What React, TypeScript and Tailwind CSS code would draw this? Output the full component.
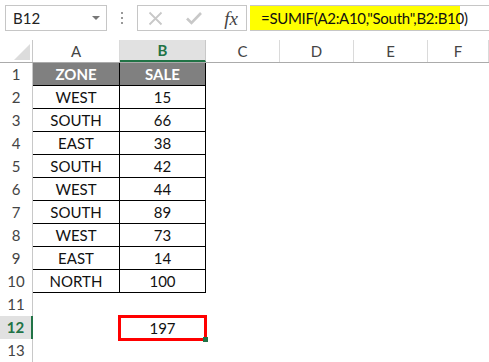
import React from "react";

const font = { fontFamily: "Lato, 'Liberation Sans', sans-serif" };

const rows: [string, string][] = [
  ["WEST", "15"],
  ["SOUTH", "66"],
  ["EAST", "38"],
  ["SOUTH", "42"],
  ["WEST", "44"],
  ["SOUTH", "89"],
  ["WEST", "73"],
  ["EAST", "14"],
  ["NORTH", "100"],
];

const cols = [
  { k: "A", w: "w-[87px]" },
  { k: "B", w: "w-[86px]" },
  { k: "C", w: "w-[74px]" },
  { k: "D", w: "w-[74px]" },
  { k: "E", w: "w-[74px]" },
  { k: "F", w: "flex-1" },
];

function RowNum({ n, active }: { n: number; active?: boolean }) {
  return (
    <div
      className={
        "w-[33px] shrink-0 h-full flex items-center justify-center text-[15px] border-r " +
        (active
          ? "bg-[#e1e1e1] text-[#217346] font-bold border-r-2 border-[#217346]"
          : "text-[#444] border-[#c8c8c8]")
      }
    >
      {n}
    </div>
  );
}

export default function App() {
  return (
    <div className="w-[489px] h-[362px] bg-white overflow-hidden relative" style={font}>
      {/* formula bar */}
      <div className="h-[40px] flex items-start pt-[5px]">
        <div className="ml-[5px] w-[102px] h-[26px] border border-[#c6c6c6] flex items-center justify-between pl-[7px] pr-[6px]">
          <span className="text-[15px] text-[#222]">B12</span>
          <span className="w-0 h-0 border-l-[4px] border-r-[4px] border-t-[4px] border-l-transparent border-r-transparent border-t-[#777]" />
        </div>
        <div className="w-[30px] h-[26px] flex flex-col items-center justify-center gap-[3px]">
          <span className="w-[2px] h-[2px] bg-[#999]" />
          <span className="w-[2px] h-[2px] bg-[#999]" />
          <span className="w-[2px] h-[2px] bg-[#999]" />
        </div>
        <div className="w-[110px] h-[26px] border border-[#c6c6c6] flex items-center pl-[10px] pr-[8px] justify-between">
          <svg width="15" height="15" viewBox="0 0 15 15">
            <path d="M1.5 1.5 L13.5 13.5 M13.5 1.5 L1.5 13.5" stroke="#c8c8c8" strokeWidth="1.8" />
          </svg>
          <svg width="16" height="14" viewBox="0 0 16 14">
            <path d="M1 7.5 L5.5 12 L15 2" stroke="#c8c8c8" strokeWidth="2.6" fill="none" />
          </svg>
          <span className="text-[19px] italic text-[#444] leading-none" style={{ fontFamily: "'Liberation Serif', serif" }}>
            fx
          </span>
        </div>
        <div className="ml-[3px] flex-1 h-[26px] border-y border-[#c6c6c6] flex items-stretch">
          <div className="w-[210px] bg-[#ffff00] flex items-center pl-[11px] text-[15px] tracking-[-0.3px] text-[#111] whitespace-nowrap">
            =SUMIF(A2:A10,"South",B2:B10)
          </div>
        </div>
      </div>

      {/* column headers */}
      <div className="h-[23px] flex border-b border-[#ababab]">
        <div className="w-[33px] shrink-0 border-r border-[#c8c8c8] flex items-end justify-end pr-[2px] pb-[2px]">
          <span className="w-0 h-0 border-b-[16px] border-l-[16px] border-b-[#dcdcdc] border-l-transparent" />
        </div>
        {cols.map((c) => (
          <div
            key={c.k}
            className={
              c.w +
              " shrink-0 flex items-center justify-center text-[15px] " +
              (c.k === "B"
                ? "bg-[#e1e1e1] text-[#217346] font-bold border-b-2 border-[#217346] border-r border-r-[#c8c8c8]"
                : "text-[#444] border-r border-[#dadada]")
            }
          >
            {c.k}
          </div>
        ))}
      </div>

      {/* row 1 */}
      <div className="h-[23px] flex">
        <RowNum n={1} />
        <div className="w-[87px] shrink-0 bg-[#808080] text-white font-bold text-[15px] flex items-center justify-center border-r border-b border-black">
          ZONE
        </div>
        <div className="w-[86px] shrink-0 bg-[#808080] text-white font-bold text-[15px] flex items-center justify-center border-r border-b border-black">
          SALE
        </div>
      </div>

      {rows.map(([z, s], i) => (
        <div key={i} className="h-[23px] flex">
          <RowNum n={i + 2} />
          <div className="w-[87px] shrink-0 text-[15px] text-[#111] flex items-center justify-center border-r border-b border-black">
            {z}
          </div>
          <div className="w-[86px] shrink-0 text-[15px] text-[#111] flex items-center justify-center border-r border-b border-black">
            {s}
          </div>
        </div>
      ))}

      <div className="h-[23px] flex">
        <RowNum n={11} />
      </div>
      <div className="h-[23px] flex">
        <RowNum n={12} active />
        <div className="w-[85px] shrink-0" />
        <div className="relative w-[89px] h-[26px] -mt-[1px] shrink-0 border-[3px] border-[#ff0000] flex items-center justify-center text-[15px] text-[#111]">
          197
          <span className="absolute -right-[4px] -bottom-[4px] w-[5px] h-[5px] bg-[#217346]" />
        </div>
      </div>
      <div className="h-[23px] flex">
        <RowNum n={13} />
      </div>
    </div>
  );
}
